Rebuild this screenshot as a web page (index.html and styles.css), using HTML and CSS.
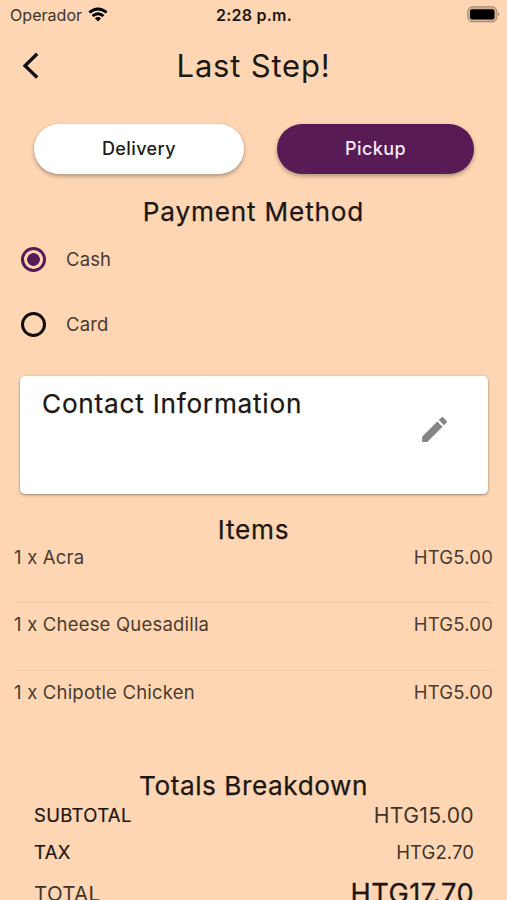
FILE: index.html
```html
<!DOCTYPE html>
<html lang="en"><head><meta charset="utf-8"><title>Last Step</title><link rel="stylesheet" href="styles.css"></head>
<body>
<div class="status"><span class="carrier"><span class="t-carrier">Operador</span>
<svg class="wifi" width="20" height="15" viewBox="0 0 20 15"><path d="M.4 4.5Q10-3.6 19.6 4.5L17.7 6.6Q10 .4 2.3 6.6ZM3.6 7.9Q10 2.6 16.4 7.9L14.5 10Q10 6.4 5.5 10ZM6.9 11.3Q10 8.9 13.1 11.3L10 14.6Z"/></svg></span>
<span class="t-clock">2:28 p.m.</span>
<svg class="battery" width="33" height="17" viewBox="0 0 33 17"><rect x=".8" y=".8" width="29" height="15" rx="4.5" fill="#d4b092" stroke="#a1866f"/><rect x="3" y="3.2" width="24.5" height="10.2" rx="1.8"/><path d="M31 6q2.2 2.3 0 4.6z" fill="#a1866f"/></svg></div>
<header class="bar"><svg class="back" width="18" height="28" viewBox="0 0 18 28"><path d="M15.2 1.8L3 13.8L15.2 25.5" fill="none" stroke="#111" stroke-width="3.3"/></svg><h1 class="t-title">Last Step!</h1></header>
<div class="modes"><button class="mode"><span class="t-del">Delivery</span></button><button class="mode mode-on"><span class="t-pick">Pickup</span></button></div>
<h2 class="pay"><span class="t-pay">Payment Method</span></h2>
<div class="radios"><label class="radio"><span class="ring ring-on"></span><span class="t-cash">Cash</span></label><label class="radio"><span class="ring"></span><span class="t-card">Card</span></label></div>
<section class="card"><h2><span class="t-contact">Contact Information</span></h2><svg class="pencil" width="33" height="33" viewBox="0 0 24 24"><path fill="#858585" d="M3 17.25V21h3.75L17.81 9.94l-3.75-3.75L3 17.25zM20.71 7.04a1 1 0 0 0 0-1.41l-2.34-2.34a1 1 0 0 0-1.41 0l-1.83 1.83 3.75 3.75 1.83-1.83z"/></svg></section>
<h2 class="items-title"><span class="t-items">Items</span></h2>
<ul class="items"><li><span class="t-i1">1 x Acra</span><span class="t-price">HTG5.00</span></li><li><span class="t-i2">1 x Cheese Quesadilla</span><span class="t-price">HTG5.00</span></li><li><span class="t-i3">1 x Chipotle Chicken</span><span class="t-price">HTG5.00</span></li></ul>
<h2 class="totals-title"><span class="t-totals">Totals Breakdown</span></h2>
<div class="totals"><div class="row sub"><span class="t-sub">SUBTOTAL</span><span class="v-sub">HTG15.00</span></div><div class="row tax"><span class="t-tax">TAX</span><span class="v-tax">HTG2.70</span></div><div class="row total"><span class="t-total">TOTAL</span><span class="v-total">HTG17.70</span></div></div>
</body></html>
```
FILE: styles.css
```css
*{box-sizing:border-box}
html,body{margin:0;height:900px;overflow:hidden}
body{background:#fed6b3;color:#1d1713;font-family:Inter,sans-serif;font-size:18.5px;letter-spacing:.3px}
h1,h2,ul{margin:0;padding:0;font-weight:400}
.status{height:30px;display:grid;grid-template-columns:1fr auto 1fr;align-items:center;padding:0 7px 0 10px;font-size:16px}
.carrier{display:flex;align-items:center;gap:6px;color:#40342a}
.t-carrier{letter-spacing:.05px}
.wifi{fill:#000;margin-top:-1px}
.t-clock{font-weight:600;letter-spacing:.25px;margin-left:-2px}
.battery{justify-self:end;margin-top:-1px}
.bar{height:72px;display:grid;grid-template-columns:60px 1fr 60px;align-items:center}
.back{margin-left:22px}
.bar h1{text-align:center;font-size:31px;letter-spacing:.8px;margin-top:-2px}
.modes{display:flex;gap:33px;padding:22px 33px 0 34px}
.mode{width:210px;height:50px;border:0;border-radius:25px;background:#fff;color:#211c19;font:500 18px Inter,sans-serif;letter-spacing:.4px;box-shadow:0 2px 4px #0005}
.mode span{position:relative;top:-.5px}
.mode-on{width:197px;background:#591b56;color:#f6e8f6}
h2{font-size:26.2px;line-height:32px;letter-spacing:.75px;text-align:center;-webkit-text-stroke:.25px currentColor}
.pay{margin-top:22px;letter-spacing:.8px}
.radios,.items{color:#493b30}
.radios{margin-top:-1px}
.radio{height:65px;display:flex;align-items:center;gap:20px;padding-left:21px}
.t-cash,.t-card{margin-top:-2px;letter-spacing:.15px}
.ring{width:25px;height:25px;border:3px solid #110f0d;border-radius:50%}
.ring-on{border-color:#561a56;background:radial-gradient(circle,#561a56 6px,transparent 6.7px)}
.card{height:118px;margin:19px 19px 0 20px;background:#fff;border-radius:5px;box-shadow:0 1px 3px #0006;display:flex;justify-content:space-between;padding:12px 37px 0 22px}
.t-contact{letter-spacing:.76px}
.pencil{margin-top:25px}
.items-title{margin-top:20px}
.items{list-style:none;padding:0 14px}
.items li{display:flex;justify-content:space-between;height:67.5px;line-height:22px;letter-spacing:.2px}
.items li:first-child{height:56.5px;margin-top:-.5px}
.items li+li{border-top:1px solid #f0c9a9;padding-top:10px}
.totals-title{margin-top:32.5px;letter-spacing:.55px}
.row{display:flex;justify-content:space-between;align-items:center;padding:0 33px 0 34px}
.sub{height:26px}
.tax{height:49px}
.total{height:34px}
.t-sub,.t-tax{-webkit-text-stroke:.2px currentColor}
.v-sub{font-size:21.2px;color:#40342a}
.v-tax{letter-spacing:.1px;color:#40342a}
.t-total{font-size:20.5px;color:#40342a}
.v-total{font-size:27.2px;letter-spacing:.45px;-webkit-text-stroke:.3px currentColor}
```
